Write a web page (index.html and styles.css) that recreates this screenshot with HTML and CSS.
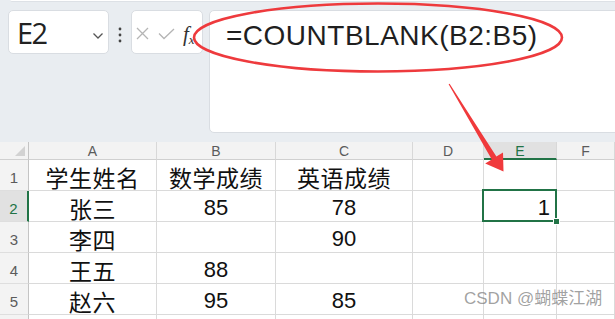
FILE: index.html
```html
<!DOCTYPE html>
<html lang="zh">
<head>
<meta charset="utf-8">
<link rel="stylesheet" href="styles.css">
</head>
<body>
<div class="page">
  <div class="topstrip"></div>
  <div class="toolbar">
    <div class="namebox">
      <span class="cellref">E2</span>
      <svg class="chev" width="12" height="8" viewBox="0 0 12 8"><polyline points="1.5,1.5 6,6 10.5,1.5" fill="none" stroke="#555" stroke-width="1.3"/></svg>
    </div>
    <div class="dots">
      <svg width="4" height="16" viewBox="0 0 4 16"><circle cx="2" cy="2" r="1.4" fill="#444"/><circle cx="2" cy="8" r="1.4" fill="#444"/><circle cx="2" cy="14" r="1.4" fill="#444"/></svg>
    </div>
    <div class="fxbox">
      <svg class="xicon" width="13" height="13" viewBox="0 0 13 13"><path d="M1 1 L12 12 M12 1 L1 12" stroke="#b5b5b5" stroke-width="1.3" fill="none"/></svg>
      <svg class="ok" width="17" height="12" viewBox="0 0 17 12"><polyline points="1,5.5 6,10.5 16,1" fill="none" stroke="#b5b5b5" stroke-width="1.3"/></svg>
      <span class="fx">f<span class="fxsub">x</span></span>
    </div>
    <div class="formula">=COUNTBLANK(B2:B5)</div>
  </div>

  <div class="sheet">
    <div class="hd corner"><span class="tri"></span></div>
    <div class="hd col">A</div>
    <div class="hd col">B</div>
    <div class="hd col">C</div>
    <div class="hd col">D</div>
    <div class="hd col sel-col">E</div>
    <div class="hd col">F</div>

    <div class="hd row">1</div>
    <div class="c zh">学生姓名</div>
    <div class="c zh">数学成绩</div>
    <div class="c zh">英语成绩</div>
    <div class="c"></div>
    <div class="c"></div>
    <div class="c"></div>

    <div class="hd row sel-row">2</div>
    <div class="c zh">张三</div>
    <div class="c">85</div>
    <div class="c">78</div>
    <div class="c"></div>
    <div class="c num active">1<span class="handle"></span></div>
    <div class="c"></div>

    <div class="hd row">3</div>
    <div class="c zh">李四</div>
    <div class="c"></div>
    <div class="c">90</div>
    <div class="c"></div>
    <div class="c"></div>
    <div class="c"></div>

    <div class="hd row">4</div>
    <div class="c zh">王五</div>
    <div class="c">88</div>
    <div class="c"></div>
    <div class="c"></div>
    <div class="c"></div>
    <div class="c"></div>

    <div class="hd row">5</div>
    <div class="c zh">赵六</div>
    <div class="c">95</div>
    <div class="c">85</div>
    <div class="c"></div>
    <div class="c"></div>
    <div class="c"></div>

    <div class="hd row"></div>
    <div class="c"></div>
    <div class="c"></div>
    <div class="c"></div>
    <div class="c"></div>
    <div class="c"></div>
    <div class="c"></div>
  </div>

  <svg class="annot" width="615" height="319" viewBox="0 0 615 319">
    <ellipse cx="378" cy="37.5" rx="184" ry="34" fill="none" stroke="#ee3a3d" stroke-width="2.6"/>
    <polygon points="448.6,84.3 449.6,83.7 496.4,156.6 503,152.6 503.5,171.5 485.2,163.4 491.8,159.4" fill="#f03a3c"/>
  </svg>
  <div class="watermark">CSDN @蝴蝶江湖</div>
</div>
</body>
</html>
```

FILE: styles.css
```css
html, body {
  margin: 0;
  padding: 0;
}
body {
  background: #e9edf1;
  font-family: "Liberation Sans", "Noto Sans CJK SC", sans-serif;
  overflow: hidden;
  width: 615px;
  height: 319px;
}
.page {
  position: relative;
  width: 615px;
  height: 319px;
  overflow: hidden;
}
.topstrip {
  height: 2px;
  margin-left: 10px;
  background: #ffffff;
  border-bottom: 1px solid #dde1e6;
  border-bottom-left-radius: 4px;
  box-sizing: border-box;
}
.toolbar {
  display: flex;
  align-items: flex-start;
  padding: 8px 0 0 8px;
  height: 123px;
}
.namebox {
  width: 101px;
  height: 44px;
  box-sizing: border-box;
  background: #fff;
  border: 1px solid #d9dde2;
  border-radius: 5px;
  display: flex;
  align-items: flex-start;
  padding: 5px 0 0 8px;
}
.cellref {
  font-family: "Open Sans", "Liberation Sans", sans-serif;
  font-size: 29px;
  line-height: 34px;
  color: #222;
  letter-spacing: -1.5px;
  flex: 1;
}
.chev {
  margin: 16px 4px 0 0;
}
.dots {
  width: 22px;
  height: 44px;
  display: flex;
  justify-content: center;
  padding-top: 17px;
  box-sizing: border-box;
}
.fxbox {
  width: 72px;
  height: 44px;
  box-sizing: border-box;
  background: #fff;
  border: 1px solid #d9dde2;
  border-radius: 5px;
  display: flex;
  align-items: flex-start;
  padding: 16px 0 0 4px;
  overflow: hidden;
}
.xicon {
  margin-right: 9px;
}
.ok {
  margin-top: 1px;
  margin-right: 8px;
}
.fx {
  font-family: "Liberation Serif", serif;
  font-style: italic;
  font-size: 21px;
  line-height: 16px;
  color: #333;
  margin-top: -1px;
  white-space: nowrap;
}
.fxsub {
  font-size: 13px;
  vertical-align: -3px;
}
.formula {
  flex: 1;
  margin-left: 6px;
  margin-right: -12px;
  height: 123px;
  box-sizing: border-box;
  background: #fff;
  border: 1px solid #d9dde2;
  border-radius: 5px;
  padding: 9px 0 0 16px;
  font-family: "Liberation Sans", sans-serif;
  font-size: 28px;
  letter-spacing: 0.5px;
  line-height: 32px;
  color: #1f1f1f;
}
.sheet {
  margin-top: 9px;
  display: grid;
  grid-template-columns: 29px 128px 119px 137px 71px 73px 1fr;
  grid-template-rows: 18px repeat(6, 31px);
  background: #fff;
}
.hd {
  background: #f3f3f3;
  color: #5b5b5b;
  box-sizing: border-box;
  border-right: 1px solid #d8d8d8;
  border-bottom: 1px solid #d0d0d0;
  text-align: center;
}
.col {
  font-size: 14px;
  line-height: 18px;
}
.row {
  font-size: 15px;
  line-height: 20px;
  padding-top: 8px;
  border-right: 1px solid #c4c4c4;
  border-bottom: 1px solid #dedede;
}
.corner {
  position: relative;
  border-right: 1px solid #c4c4c4;
}
.tri {
  position: absolute;
  right: 3px;
  bottom: 3px;
  width: 0;
  height: 0;
  border-left: 10px solid transparent;
  border-bottom: 10px solid #d2d2d2;
}
.sel-col {
  background: #e1e1e1;
  color: #217346;
  border-bottom: 2px solid #217346;
}
.sel-row {
  background: #e1e1e1;
  color: #217346;
  border-right: 2px solid #217346;
}
.c {
  box-sizing: border-box;
  border-right: 1px solid #dadada;
  border-bottom: 1px solid #dadada;
  text-align: center;
  font-size: 22px;
  line-height: 26px;
  padding-top: 4px;
  color: #111;
  white-space: nowrap;
}
.zh {
  font-family: "Noto Sans CJK SC", sans-serif;
  font-size: 23px;
  letter-spacing: 0.5px;
}
.num {
  text-align: right;
  padding-right: 6px;
}
.active {
  position: relative;
}
.active::after {
  content: "";
  position: absolute;
  left: -2px;
  top: -2px;
  right: -1px;
  bottom: -1px;
  border: 2px solid #217346;
}
.handle {
  position: absolute;
  right: -4px;
  bottom: -4px;
  width: 5px;
  height: 5px;
  background: #217346;
  border: 1px solid #fff;
  z-index: 2;
}
.annot {
  position: absolute;
  left: 0;
  top: 0;
  pointer-events: none;
  z-index: 5;
}
.watermark {
  position: absolute;
  left: 464px;
  top: 288px;
  font-family: "Liberation Sans", "Noto Sans CJK SC", sans-serif;
  font-size: 17px;
  line-height: 22px;
  color: rgba(120, 120, 120, 0.7);
  z-index: 6;
  white-space: nowrap;
}
```
